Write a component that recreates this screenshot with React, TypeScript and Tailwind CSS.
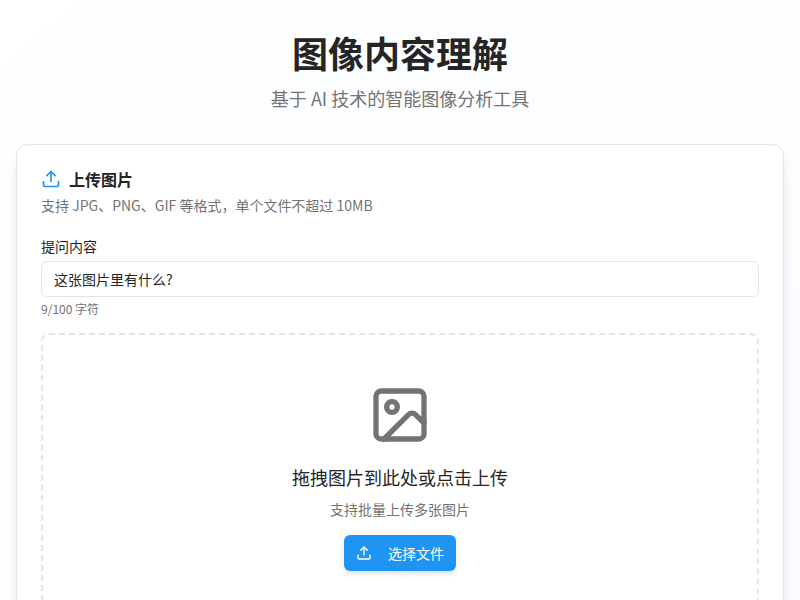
import { Image, Upload } from 'lucide-react';
import { useState } from 'react';

const MAX_LENGTH = 100;

const Header = () => {
  return (
    <header className="text-center mb-8">
      <h1 className="text-4xl font-bold mb-3">图像内容理解</h1>
      <p className="text-lg text-[#737373]">基于 AI 技术的智能图像分析工具</p>
    </header>
  );
};

const PromptField = () => {
  const [prompt, setPrompt] = useState('这张图片里有什么?');

  return (
    <div>
      <label htmlFor="prompt" className="block text-sm leading-none mb-2">
        提问内容
      </label>
      <input
        id="prompt"
        type="text"
        value={prompt}
        maxLength={MAX_LENGTH}
        onChange={(e) => setPrompt(e.target.value)}
        className="w-full h-9 rounded-md border border-[#e5e5e5] bg-white px-3 py-1 text-sm"
      />
      <p className="mt-1 text-xs text-[#737373]">
        {prompt.length}/{MAX_LENGTH} 字符
      </p>
    </div>
  );
};

const DropZone = () => {
  return (
    <div className="rounded-lg border-2 border-dashed border-[#e5e5e5] p-12 text-center">
      <Image size={64} className="mx-auto mb-4 text-[#737373]" />
      <p className="text-lg mb-2">拖拽图片到此处或点击上传</p>
      <p className="text-sm text-[#737373] mb-4">支持批量上传多张图片</p>
      <button
        type="button"
        className="inline-flex h-9 items-center rounded-md bg-[#2094f3] px-3 text-sm text-white shadow-md"
      >
        <Upload size={16} className="mr-4" />
        选择文件
      </button>
    </div>
  );
};

export default function App() {
  return (
    <div className="min-h-screen bg-linear-to-br from-white to-[#fafcff] px-4 py-8 font-['Noto_Sans_CJK_SC',sans-serif] text-[#252525]">
      <Header />
      <main className="mx-auto max-w-6xl">
        <section className="rounded-xl border border-[#e5e5e5] bg-white p-6 shadow-lg">
          <div className="mb-6 space-y-1.5">
            <h2 className="flex items-center gap-2 leading-none font-semibold">
              <Upload size={20} className="text-[#2094f3]" />
              上传图片
            </h2>
            <p className="text-sm text-[#737373]">支持 JPG、PNG、GIF 等格式，单个文件不超过 10MB</p>
          </div>
          <div className="space-y-4">
            <PromptField />
            <DropZone />
          </div>
        </section>
      </main>
    </div>
  );
}
